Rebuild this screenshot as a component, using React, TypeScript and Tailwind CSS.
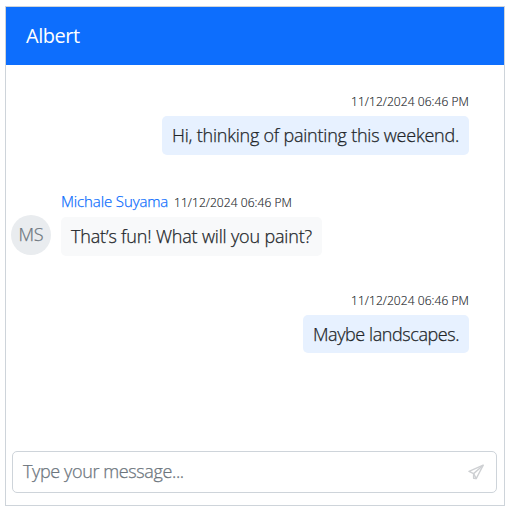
import React from "react";

const TIME = "11/12/2024 06:46 PM";

function Time() {
  return (
    <time className="block whitespace-nowrap text-[12px] leading-4 tracking-[0.06px] text-[#212529] [-webkit-text-stroke:0.15px]">
      {TIME}
    </time>
  );
}

function SendIcon() {
  return (
    <svg
      viewBox="0 0 16 16"
      className="size-4"
      fill="none"
      stroke="#ced0d3"
      strokeWidth="1.4"
      strokeLinejoin="round"
    >
      <path d="M15.2 1.2 1 7.4l4.6 2.2 2.6 5L15.2 1.2Z" />
      <path d="M5.6 9.6 15.2 1.2M5.6 9.6v4.6l2.6.4" />
    </svg>
  );
}

export default function App() {
  return (
    <main className="h-[511px] w-[512px] overflow-hidden bg-white pl-[5px] pt-[6px] font-['Open_Sans','Noto_Sans',sans-serif] font-light text-[#212529] [-webkit-text-stroke:0.25px]">
      <section className="flex h-[500px] w-[500px] flex-col border border-[#ced4da]">
        <header className="h-[58px] shrink-0 bg-[#0d6efd] pl-5 pt-[15px] text-[20px] font-normal leading-7 tracking-[-0.45px] text-white [-webkit-text-stroke:0px]">
          Albert
        </header>
        <div className="flex flex-1 flex-col">
          <div className="mr-[35px] mt-[29px] flex flex-col items-end">
            <Time />
            <p className="mt-[6px] h-[39px] w-[307px] whitespace-nowrap rounded-[5px] bg-[#e7f1ff] pl-[10px] pt-[7px] text-[18px] leading-6 tracking-[-0.22px]">
              Hi, thinking of painting this weekend.
            </p>
          </div>
          <div className="mt-[37px] flex items-end pl-[5px]">
            <div className="mb-px flex size-10 items-center justify-center rounded-full bg-[#e9ecef] pb-px text-[18px] tracking-[-0.3px] text-[#6c757d]">
              MS
            </div>
            <div className="ml-[10px]">
              <div className="flex h-5 items-end gap-[6px] pb-px">
                <span className="w-[107px] whitespace-nowrap text-[15px] leading-5 tracking-[-0.12px] text-[#0d6efd]">
                  Michale Suyama
                </span>
                <Time />
              </div>
              <p className="mt-[5px] h-[39px] w-[261px] whitespace-nowrap rounded-[5px] bg-[#f8f9fa] pl-[10px] pt-[7px] text-[18px] leading-6 tracking-[-0.17px]">
                That’s fun! What will you paint?
              </p>
            </div>
          </div>
          <div className="mr-[35px] mt-[37px] flex flex-col items-end">
            <Time />
            <p className="mt-[6px] h-[38px] w-[166px] whitespace-nowrap rounded-[5px] bg-[#e7f1ff] pl-[10px] pt-[7px] text-[18px] leading-6 tracking-[-0.42px]">
              Maybe landscapes.
            </p>
          </div>
        </div>
        <footer className="mx-[6px] mb-3 mr-[7px] flex h-[42px] shrink-0 items-center justify-between rounded-[5px] border border-[#ced4da] pl-[10px] pr-3">
          <span className="whitespace-nowrap pb-[2px] text-[18px] leading-6 tracking-[-0.38px] text-[#6c757d]">
            Type your message...
          </span>
          <button type="button" aria-label="Send">
            <SendIcon />
          </button>
        </footer>
      </section>
    </main>
  );
}
